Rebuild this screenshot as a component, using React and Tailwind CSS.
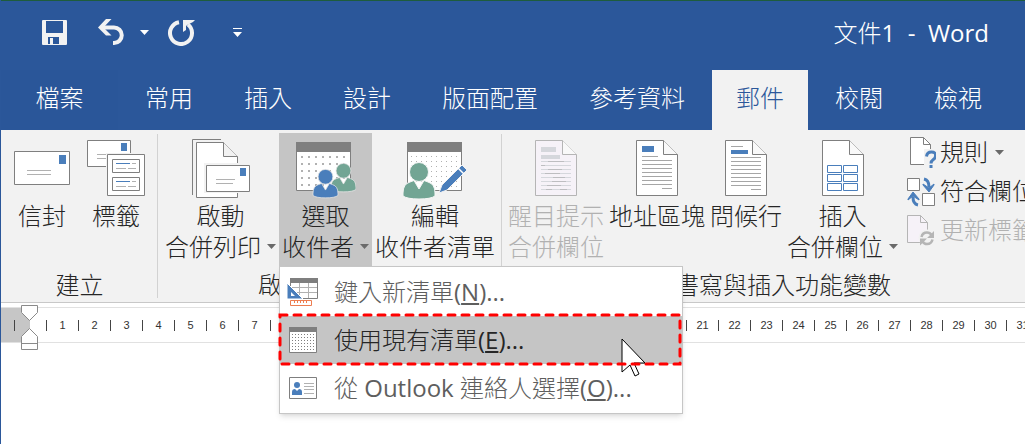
const tabs = ["常用", "插入", "設計", "版面配置", "參考資料", "郵件", "校閱", "檢視"];
const rulerMarks = Array.from({ length: 31 }, (_, i) => i + 1);

const Caret = ({ className = "text-[#6a6a6a]" }) => (
  <svg width="9" height="5" viewBox="0 0 9 5" className={`shrink-0 ${className}`}>
    <path d="M0 0h9L4.500 5z" fill="currentColor" />
  </svg>
);

/* QUICK ACCESS ICONS */
const SaveIcon = () => (
  <svg width="25" height="25" viewBox="0 0 25 25">
    <path
      fillRule="evenodd"
      fill="#f2f2f2"
      d="M1 0h23a1 1 0 0 1 1 1v23a1 1 0 0 1-1 1H1a1 1 0 0 1-1-1V1a1 1 0 0 1 1-1zM4 1v12h17V1zM6 17v7h2v-6h3v6h6v-7z"
    />
  </svg>
);

const UndoIcon = () => (
  <svg width="27" height="27" viewBox="0 0 27 27">
    <path d="M4 8.500h12a7.700 7.700 0 0 1 0 15.500h-1" fill="none" stroke="#f2f2f2" strokeWidth="4" />
    <path d="M8 0h5.500L5.500 8.500l8 8H8L0 8.500z" fill="#f2f2f2" />
  </svg>
);

const RedoIcon = () => (
  <svg width="27" height="27" viewBox="0 0 27 27">
    <path d="M11 3.200A11 11 0 1 0 20 5.500" fill="none" stroke="#f2f2f2" strokeWidth="4" />
    <path d="M15 1h12l-2 2-5 2.500-2 1.500v4l-3 2z" fill="#f2f2f2" />
  </svg>
);

/* RIBBON ICONS */
const EnvelopeIcon = () => (
  <svg width="56" height="58" viewBox="0 0 56 58">
    <path d="M.5 12.500h55v33H.5z" fill="#fff" stroke="#7f7f7f" />
    <path d="M45 16h7v9h-7z" fill="#4a7ebb" />
    <path d="M13 31.500h24M13 35.500h24" stroke="#b1b1b1" />
  </svg>
);

const LabelsIcon = () => (
  <svg width="58" height="58" viewBox="0 0 58 58">
    <path d="M.5 1.500h43v26H.5z" fill="#fff" stroke="#7f7f7f" />
    <path d="M34 4h6v8h-6z" fill="#4a7ebb" />
    <path d="M10 15.500h9M10 19.500h9" stroke="#b1b1b1" />
    <path d="M19 14h39v43H19z" fill="#f2f2f2" />
    <path d="M20.500 15.500h37v41h-37z" fill="#fff" stroke="#7f7f7f" />
    <path d="M25.500 20.500h27v13h-27zM25.500 38.500h27v13h-27z" fill="#fff" stroke="#7f7f7f" />
    <path d="M29 24.500h14M29 42.500h14" stroke="#4a7ebb" />
    <path d="M45 24.500h4M29 29.500h10M41 29.500h8M45 42.500h4M29 47.500h10M41 47.500h8" stroke="#b1b1b1" />
  </svg>
);

const StartMergeIcon = () => (
  <svg width="58" height="60" viewBox="0 0 58 60">
    <path d="M.5 56V.5H29" fill="none" stroke="#7f7f7f" />
    <path d="M4.500 3.500h27l14 14v41h-41z" fill="#fff" stroke="#7f7f7f" />
    <path d="M31.500 3.500v14h14" fill="#f2f2f2" stroke="#7f7f7f" />
    <path d="M12 24h46v30H12z" fill="#f2f2f2" />
    <path d="M14.500 26.500h43v26h-43z" fill="#fff" stroke="#7f7f7f" />
    <path d="M48 29h6v8h-6z" fill="#4a7ebb" />
    <path d="M24 40.500h19M24 44.500h17" stroke="#b1b1b1" />
  </svg>
);

const Person = ({ x, y, color, halo, scale = 1 }) => (
  <g transform={`translate(${x} ${y}) scale(${scale})`} fill={color} stroke={halo} strokeWidth="1">
    <path d="M0 31q0-9 7-11l4-1.500 5 8.500 5-8.500 4 1.500q7 2 7 11v3q-4 3-16 3t-16-3z" />
    <circle cx="16" cy="10" r="9.500" />
  </g>
);

const RecipientsIcon = () => (
  <svg width="60" height="60" viewBox="0 0 60 60">
    <path d="M.5 3.500h54v48H.5z" fill="#fff" stroke="#7f7f7f" />
    <path d="M0 3h55v10H0z" fill="#7f7f7f" />
    <path
      d="M5 18h48M5 25h48M5 32h48M5 39h48M5 46h48"
      stroke="#b1b1b1"
      strokeWidth="2"
      strokeDasharray="2 5"
    />
    <Person x={35} y={24} color="#72a594" halo="#e4e4e4" scale={0.78} />
    <Person x={17} y={30} color="#4a7ebb" halo="#e4e4e4" scale={0.78} />
  </svg>
);

const EditListIcon = () => (
  <svg width="64" height="60" viewBox="0 0 64 60">
    <path d="M4.500 3.500h54v48h-54z" fill="#fff" stroke="#7f7f7f" />
    <path d="M4 3h55v10H4z" fill="#7f7f7f" />
    <path
      d="M8 17.500h48M8 22.500h48M8 27.500h48M8 32.500h48M8 37.500h48M8 42.500h48M8 47.500h48"
      stroke="#b1b1b1"
      strokeDasharray="1 4"
    />
    <Person x={0} y={23} color="#72a594" halo="#f6f6f6" />
    <path d="M36 54l3-8 20-20 5 5-20 20z" fill="#4a7ebb" stroke="#f2f2f2" />
    <path d="M55 29l6 6" stroke="#fff" strokeWidth="1.500" />
  </svg>
);

const Page = ({ children, stroke = "#7f7f7f", fill = "#fff" }) => (
  <svg width="42" height="58" viewBox="0 0 42 58">
    <path d="M.5 1.500h27l14 14v41H.5z" fill={fill} stroke={stroke} />
    <path d="M27.500 1.500v14h14" fill="#f9f9f9" stroke={stroke} />
    {children}
  </svg>
);

const HighlightIcon = () => (
  <Page stroke="#b5b5b5" fill="#f6f2f8">
    <path d="M6 8h15v5H6zM6 16h19v4H6z" fill="#d5d7dc" />
    <path
      d="M6 22.500h30M6 26.500h30M6 30.500h30M6 34.500h30M6 38.500h30M6 42.500h30M6 46.500h30M6 50.500h30"
      stroke="#d5d7dc"
    />
    <path
      d="M13 22.500h16M6 26.500h4M13 30.500h14M10 34.500h15M18 38.500h12M17 42.500h14M12 46.500h14M11 50.500h6M25 50.500h7"
      stroke="#bdbdc0"
    />
  </Page>
);

const AddressIcon = () => (
  <Page>
    <path d="M6 7h12v6H6z" fill="#4a7ebb" />
    <path
      d="M6 17.500h16M6 21.500h30M6 25.500h30M6 29.500h30M6 33.500h30M6 37.500h30M6 41.500h30M6 45.500h30M26 49.500h10"
      stroke="#a6a6a6"
    />
  </Page>
);

const GreetingIcon = () => (
  <Page>
    <path d="M6 11h17v4H6z" fill="#4a7ebb" />
    <path
      d="M6 7.500h12M6 18.500h30M6 22.500h30M6 26.500h30M6 30.500h30M6 34.500h30M6 38.500h30M6 42.500h30M6 46.500h30M26 50.500h10"
      stroke="#a6a6a6"
    />
  </Page>
);

const InsertFieldIcon = () => (
  <Page>
    <path
      d="M5.500 26.500h14v7h-14zM21.500 26.500h14v7h-14zM5.500 35.500h14v7h-14zM21.500 35.500h14v7h-14zM5.500 44.500h14v7h-14zM21.500 44.500h14v7h-14z"
      fill="#fff"
      stroke="#4a7ebb"
    />
  </Page>
);

const RulesIcon = () => (
  <svg width="29" height="31" viewBox="0 0 29 31">
    <path d="M3.500.5h13l7 7v20h-20z" fill="#fff" stroke="#7f7f7f" />
    <path d="M16.500.5v7h7" fill="none" stroke="#7f7f7f" />
    <path d="M17 12h12v19H17z" fill="#f2f2f2" />
    <path d="M19.500 19.500q.5-4.500 5-4.500t4 4q0 2-2.200 3.500T24 26.500" fill="none" stroke="#4a7ebb" strokeWidth="3" />
    <path d="M22.500 28h3v3h-3z" fill="#4a7ebb" />
  </svg>
);

const MatchIcon = () => (
  <svg width="29" height="30" viewBox="0 0 29 30">
    <path d="M.5 1.500h12v12H.5zM15.500 16.500h12v12h-12z" fill="#fff" stroke="#7f7f7f" />
    <path d="M17 2q5 1 5 8M11 28q-5-1-5-8" fill="none" stroke="#4a7ebb" strokeWidth="3" />
    <path d="M16 8l6 7 5-7v-1l-5 4-6-4zM1 22l5-7 6 7v1l-6-4-5 4z" fill="#4a7ebb" stroke="#4a7ebb" />
  </svg>
);

const UpdateIcon = () => (
  <svg width="29" height="31" viewBox="0 0 29 31">
    <path d="M.5.5h13l7 7v20H.5z" fill="#f6f2f8" stroke="#b5b5b5" />
    <path d="M13.500.5v7h7" fill="none" stroke="#b5b5b5" />
    <circle cx="20" cy="23" r="8.500" fill="#f2f2f2" />
    <path d="M14.500 22q1-4.500 5.500-4.500 3 0 4.500 2.500M25.500 24.500q-1 4.500-5.500 4.500-3 0-4.500-2.500" fill="none" stroke="#b5b5b5" strokeWidth="2.500" />
    <path d="M27 16v7h-7zM13 30.500v-7h7z" fill="#b5b5b5" />
  </svg>
);

/* MENU ICONS */
const NewListIcon = () => (
  <svg width="32" height="30" viewBox="0 0 32 30">
    <path d="M3.500 1.500h27v20h-27z" fill="#fff" stroke="#7f7f7f" />
    <path d="M3 1h28v5H3z" fill="#7f7f7f" />
    <path d="M4 10.500h26M4 15.500h26M12.500 6v15M21.500 6v15" stroke="#b1b1b1" />
    <path d="M0 6v16h16z" fill="#4a7ebb" stroke="#fff" />
    <path d="M4 15v4h4z" fill="#fff" />
    <path d="M3.500 23.500h21v5h-21z" fill="#fff" stroke="#ed7d50" />
    <path d="M7.500 24v2M10.500 24v2M13.500 24v2M16.500 24v2M19.500 24v2" stroke="#ed7d50" />
  </svg>
);

const ExistingListIcon = () => (
  <svg width="28" height="26" viewBox="0 0 28 26">
    <path d="M.5.5h27v25H.5z" fill="#fff" stroke="#7f7f7f" />
    <path d="M0 0h28v5H0z" fill="#7f7f7f" />
    <path
      d="M3 7.500h23M3 10.500h23M3 13.500h23M3 16.500h23M3 19.500h23M3 22.500h23"
      stroke="#7f7f7f"
      strokeDasharray="1 2"
    />
  </svg>
);

const ContactIcon = () => (
  <svg width="28" height="22" viewBox="0 0 28 22">
    <path d="M.5.5h27v21H.5z" fill="#fff" stroke="#7f7f7f" />
    <circle cx="8" cy="8" r="3" fill="#4a7ebb" />
    <path d="M3 18v-3q0-3 3-3l2 2 2-2q3 0 3 3v3z" fill="#4a7ebb" />
    <path d="M15 6.500h10M15 9.500h10M15 12.500h10M15 16.500h10" stroke="#b1b1b1" />
  </svg>
);

const BigButton = ({ icon, lines, caret, active, disabled, padding = "px-[3px]" }) => (
  <button
    disabled={disabled}
    className={`flex h-[133px] shrink-0 flex-col items-center leading-[31px] whitespace-nowrap ${padding} ${
      active ? "bg-[#c5c5c5]" : ""
    } ${disabled ? "text-[#b1b1b1]" : ""}`}
  >
    <span className="flex h-[67px] items-start justify-center pt-[6px]">{icon}</span>
    <span>{lines[0]}</span>
    {lines[1] && (
      <span className="flex items-center gap-[6px]">
        {lines[1]}
        {caret && <Caret />}
      </span>
    )}
  </button>
);

const SmallButton = ({ icon, label, caret, disabled }) => (
  <button
    disabled={disabled}
    className={`flex h-[39px] items-center gap-1 whitespace-nowrap ${disabled ? "text-[#b1b1b1]" : ""}`}
  >
    {icon}
    <span className="pb-[2px]">{label}</span>
    {caret && <Caret className="ml-[3px] text-[#6a6a6a]" />}
  </button>
);

const Group = ({ label, className, gap = "", children }) => (
  <section className={`flex shrink-0 flex-col pt-[3px] ${className}`}>
    <div className={`flex ${gap}`}>{children}</div>
    <h2 className="pt-[3px] pb-[2px] text-center leading-[31px]">{label}</h2>
  </section>
);

const Divider = () => <div className="my-1 w-px shrink-0 bg-[#d2d2d2]" />;

const MenuItem = ({ icon, label, hotkey, active }) => (
  <button
    role="menuitem"
    className={`flex h-12 w-full items-center pl-[7px] text-left whitespace-nowrap ${
      active ? "bg-[#c5c5c5] text-[#262626]" : "text-[#5e5e5e]"
    }`}
  >
    <span className="flex w-8 shrink-0 justify-center">{icon}</span>
    <span className="pl-[15px]">
      {label}
      <span className="font-normal">
        (<u className="underline-offset-2">{hotkey}</u>)...
      </span>
    </span>
  </button>
);

const RecipientsMenu = () => (
  <div
    role="menu"
    className="absolute top-full left-0 z-10 w-[404px] border border-[#c6c6c6] bg-white pt-px pb-px shadow-md"
  >
    <MenuItem icon={<NewListIcon />} label="鍵入新清單" hotkey="N" />
    <div className="relative">
      <MenuItem icon={<ExistingListIcon />} label="使用現有清單" hotkey="E" active />
      {/* POINTER */}
      <svg width="25" height="40" viewBox="0 0 25 40" className="absolute top-[22px] left-[341px]">
        <path d="M1 1v33l8-7 5 11 4-2-5-11h11z" fill="#fff" stroke="#000" />
      </svg>
      {/* CALLOUT */}
      <svg className="pointer-events-none absolute -top-[3px] -left-[2px] h-[53px] w-[404px]">
        <rect
          x="2"
          y="2"
          width="400"
          height="49"
          fill="none"
          stroke="#f00"
          strokeWidth="3"
          strokeLinecap="round"
          strokeDasharray="7 7"
        />
      </svg>
    </div>
    <MenuItem
      icon={<ContactIcon />}
      label={
        <>
          從 <span className="font-normal">Outlook</span> 連絡人選擇
        </>
      }
      hotkey="O"
    />
  </div>
);

const TitleBar = () => (
  <header className="flex h-[69px] items-center justify-between pr-9 pb-[6px] pl-[41px] text-white">
    <div className="flex items-center">
      <button aria-label="儲存檔案">
        <SaveIcon />
      </button>
      <button aria-label="復原" className="ml-[31px]">
        <UndoIcon />
      </button>
      <button aria-label="復原選項" className="ml-[15px]">
        <Caret className="text-white" />
      </button>
      <button aria-label="重複" className="ml-[19px]">
        <RedoIcon />
      </button>
      <button aria-label="自訂" className="ml-[38px]">
        <svg width="9" height="9" viewBox="0 0 9 9">
          <path d="M0 0h9v1H0zM0 4h9L4.500 9z" fill="#fff" />
        </svg>
      </button>
    </div>
    <h1 className="whitespace-pre">
      文件<span className="font-normal">1  -  Word</span>
    </h1>
  </header>
);

const Tabs = () => (
  <nav className="flex h-[60px] gap-[3px] text-white">
    <button className="w-[117px] shrink-0 bg-[#2a5699] pb-1">檔案</button>
    {tabs.map((tab) => (
      <button
        key={tab}
        className={`shrink-0 px-6 pb-1 whitespace-nowrap ${tab === "郵件" ? "bg-[#f2f2f2] text-[#2b579a]" : ""}`}
      >
        {tab}
      </button>
    ))}
  </nav>
);

const Ruler = () => (
  <div className="relative mt-1 flex h-9 items-stretch border-y border-[#e1e1e1] font-['Liberation_Sans',sans-serif] text-[11px] font-normal text-[#333]">
    <div className="flex w-[29px] shrink-0 items-center bg-[#c6c6c6] pl-[13px]">
      <span className="h-[11px] w-px bg-[#444]" />
    </div>
    <div className="flex items-center pl-4">
      {rulerMarks.map((n) => (
        <div key={n} className="flex h-[11px] w-8 shrink-0 items-center justify-center border-l border-[#444]">
          {n}
        </div>
      ))}
    </div>
    {/* INDENT MARKERS */}
    <svg width="17" height="45" viewBox="0 0 17 45" className="absolute -top-[3px] left-5">
      <path
        d="M.5.5h16v7l-8 8-8-8zM8.500 23.500l8 8v13H.5v-13zM.5 38.500h16"
        fill="#fff"
        stroke="#8a8a8a"
      />
    </svg>
  </div>
);

const App = () => {
  return (
    <div className="min-h-screen overflow-hidden border-l border-[#2b579a] bg-white font-['Open_Sans','Noto_Sans_CJK_TC',sans-serif] text-2xl font-light text-[#262626]">
      <div className="border-t border-[#1e5c3c] bg-[#2b579a]">
        <TitleBar />
        <Tabs />
      </div>

      {/* RIBBON */}
      <main className="flex border-b border-[#c8c8c8] bg-[#f2f2f2]">
        <Group label="建立" className="pr-[9px] pl-[10px]" gap="gap-[11px]">
          <BigButton icon={<EnvelopeIcon />} lines={["信封"]} />
          <BigButton icon={<LabelsIcon />} lines={["標籤"]} />
        </Group>
        <Divider />
        <Group label="啟動合併列印" className="pr-[3px] pl-1">
          <BigButton icon={<StartMergeIcon />} lines={["啟動", "合併列印"]} caret />
          <div className="relative">
            <BigButton icon={<RecipientsIcon />} lines={["選取", "收件者"]} caret active />
            <RecipientsMenu />
          </div>
          <BigButton icon={<EditListIcon />} lines={["編輯", "收件者清單"]} />
        </Group>
        <Divider />
        <Group label="書寫與插入功能變數" className="pl-1" gap="gap-px">
          <BigButton icon={<HighlightIcon />} lines={["醒目提示", "合併欄位"]} padding="px-[2px]" disabled />
          <BigButton icon={<AddressIcon />} lines={["地址區塊"]} padding="px-[2px]" />
          <BigButton icon={<GreetingIcon />} lines={["問候行"]} padding="px-[2px]" />
          <BigButton icon={<InsertFieldIcon />} lines={["插入", "合併欄位"]} padding="px-[2px]" caret />
          <div className="flex flex-col pr-6 pl-[6px]">
            <SmallButton icon={<RulesIcon />} label="規則" caret />
            <SmallButton icon={<MatchIcon />} label="符合欄位" />
            <SmallButton icon={<UpdateIcon />} label="更新標籤" disabled />
          </div>
        </Group>
      </main>

      <Ruler />
    </div>
  );
};

export default App;
